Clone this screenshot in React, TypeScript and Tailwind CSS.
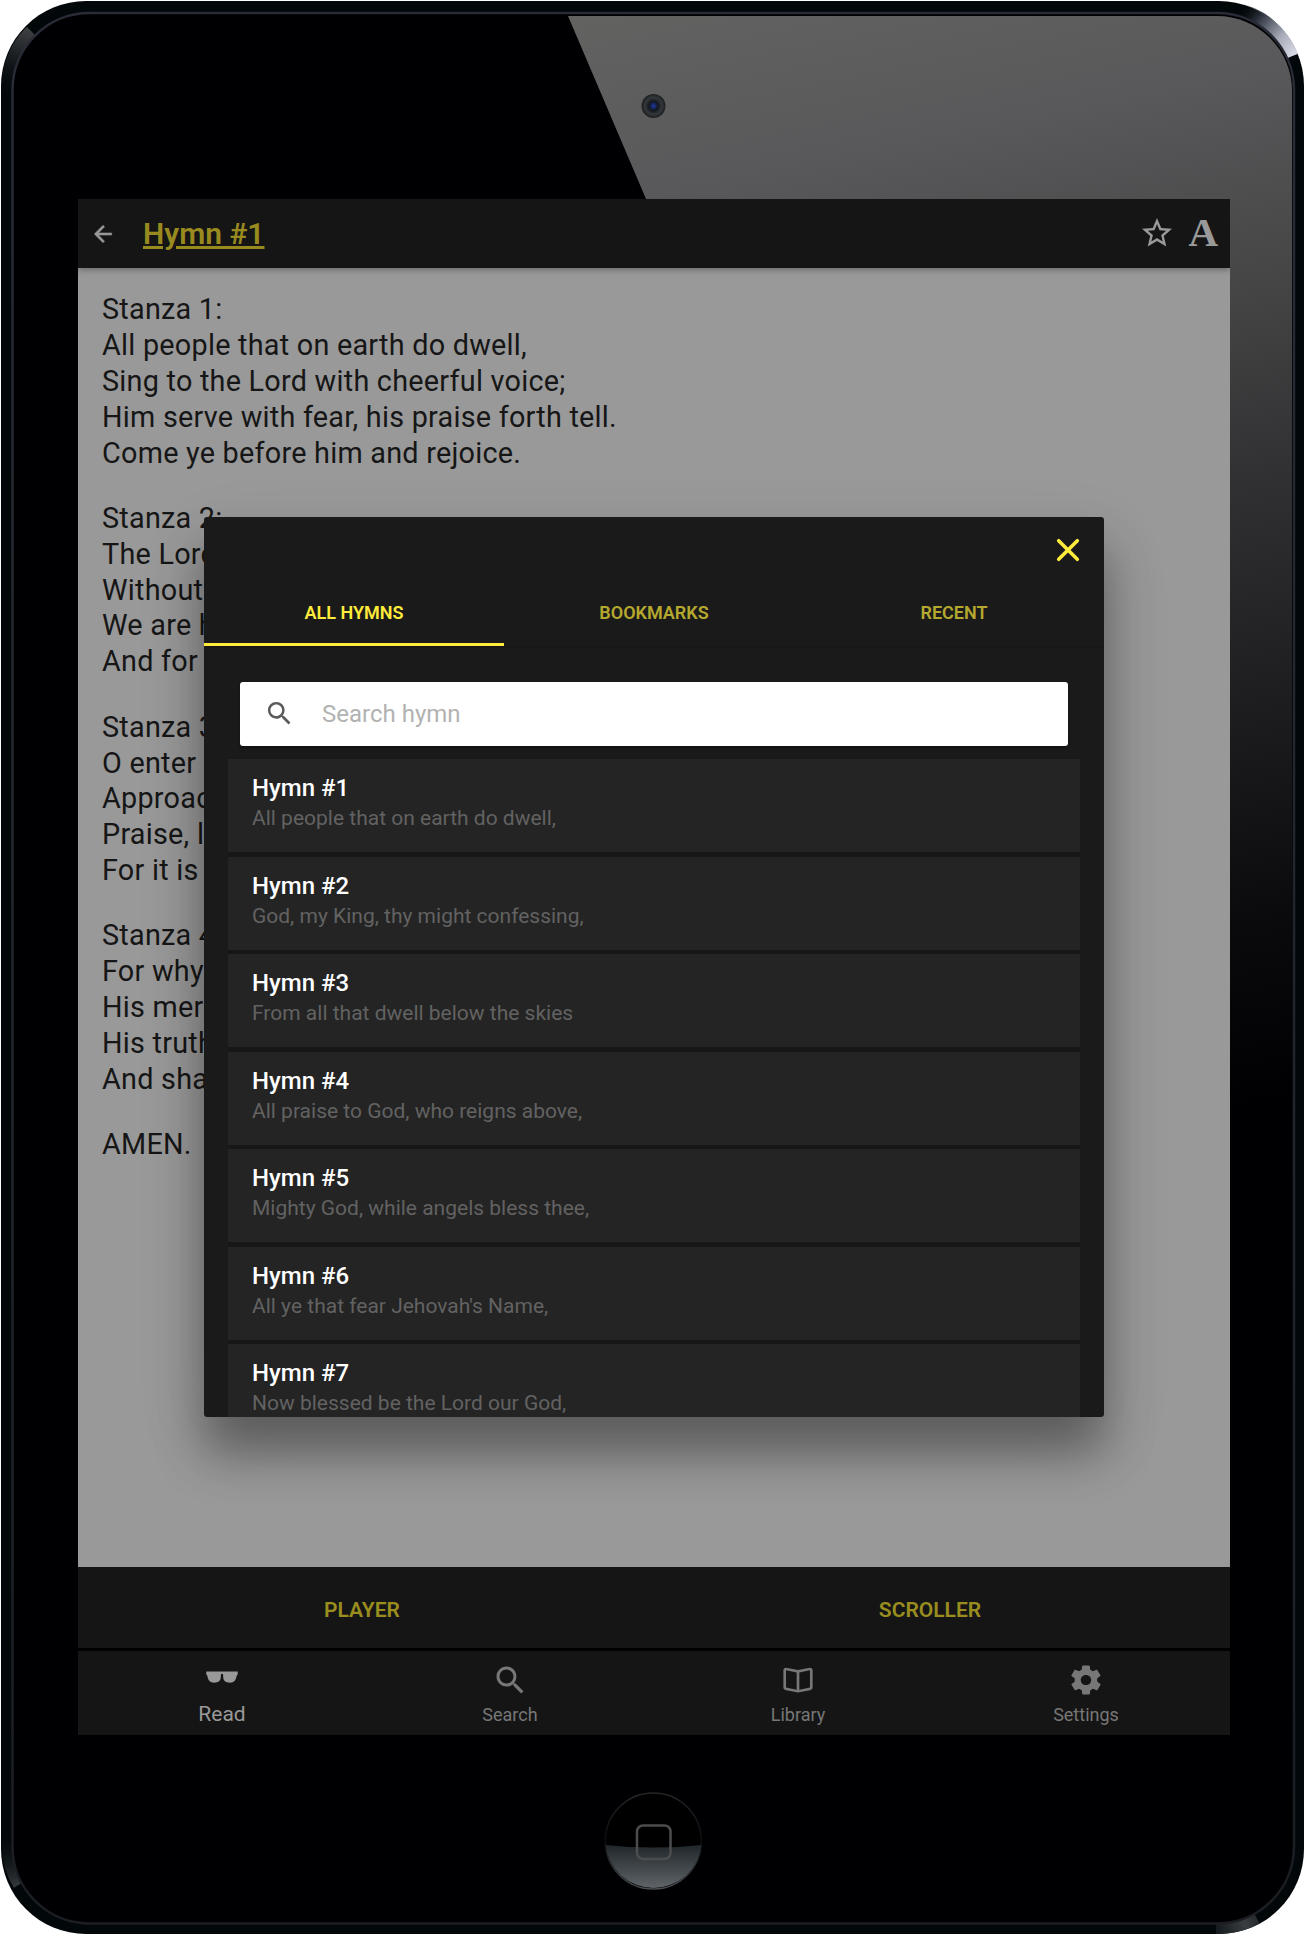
import type { ReactNode } from "react";
import { IoMdArrowBack, IoMdBook, IoMdGlasses, IoMdSearch, IoMdSettings } from "react-icons/io";
import { MdSearch, MdStarBorder } from "react-icons/md";

const STANZAS: string[][] = [
  [
    "Stanza 1:",
    "All people that on earth do dwell,",
    "Sing to the Lord with cheerful voice;",
    "Him serve with fear, his praise forth tell.",
    "Come ye before him and rejoice.",
  ],
  ["Stanza 2:", "The Lord", "Without", "We are h", "And for"],
  ["Stanza 3:", "O enter", "Approac", "Praise, l", "For it is"],
  ["Stanza 4:", "For why", "His mer", "His truth", "And sha"],
  ["AMEN."],
];

const HYMNS = [
  { title: "Hymn #1", line: "All people that on earth do dwell," },
  { title: "Hymn #2", line: "God, my King, thy might confessing," },
  { title: "Hymn #3", line: "From all that dwell below the skies" },
  { title: "Hymn #4", line: "All praise to God, who reigns above," },
  { title: "Hymn #5", line: "Mighty God, while angels bless thee," },
  { title: "Hymn #6", line: "All ye that fear Jehovah's Name," },
  { title: "Hymn #7", line: "Now blessed be the Lord our God," },
];

function TabletBody() {
  return (
    <svg className="absolute inset-0" width="1305" height="1935" viewBox="0 0 1305 1935" aria-hidden="true">
      <defs>
        <linearGradient id="glare" gradientUnits="userSpaceOnUse" x1="600" y1="16" x2="835" y2="1193">
          <stop offset="0" stopColor="#626261" />
          <stop offset="0.15" stopColor="#59595b" />
          <stop offset="0.32" stopColor="#464647" />
          <stop offset="0.49" stopColor="#303032" />
          <stop offset="0.69" stopColor="#1b1b1d" />
          <stop offset="0.85" stopColor="#0a0a0c" />
          <stop offset="1" stopColor="#000002" />
        </linearGradient>
        <linearGradient id="line" x1="0" y1="0" x2="0" y2="1">
          <stop offset="0" stopColor="#292b36" />
          <stop offset="0.5" stopColor="#22262e" />
          <stop offset="1" stopColor="#1b1d22" />
        </linearGradient>
        <linearGradient id="hiTR" gradientUnits="userSpaceOnUse" x1="1292" y1="56" x2="1238" y2="10">
          <stop offset="0" stopColor="#d6d9e4" />
          <stop offset="0.3" stopColor="#a7abb8" />
          <stop offset="0.65" stopColor="#3d444f" />
          <stop offset="1" stopColor="#02060a" stopOpacity="0" />
        </linearGradient>
        <linearGradient id="hiTL" gradientUnits="userSpaceOnUse" x1="32" y1="32" x2="6" y2="100">
          <stop offset="0" stopColor="#3c3e40" />
          <stop offset="0.4" stopColor="#1a1e21" />
          <stop offset="1" stopColor="#05090d" stopOpacity="0" />
        </linearGradient>
        <linearGradient id="hiBL" gradientUnits="userSpaceOnUse" x1="18" y1="1886" x2="6" y2="1830">
          <stop offset="0" stopColor="#34383a" />
          <stop offset="1" stopColor="#05090d" stopOpacity="0" />
        </linearGradient>
        <linearGradient id="hiBR" gradientUnits="userSpaceOnUse" x1="1257" y1="1916" x2="1214" y2="1930">
          <stop offset="0" stopColor="#24282b" />
          <stop offset="0.3" stopColor="#3a3e40" />
          <stop offset="1" stopColor="#12171b" />
        </linearGradient>
        <linearGradient id="home" x1="0" y1="0" x2="0" y2="1">
          <stop offset="0" stopColor="#1f262a" />
          <stop offset="1" stopColor="#606468" />
        </linearGradient>
        <linearGradient id="homeRing" x1="0" y1="0" x2="0" y2="1">
          <stop offset="0" stopColor="#262628" />
          <stop offset="0.5" stopColor="#0c0c0e" />
          <stop offset="1" stopColor="#4a4e52" />
        </linearGradient>
        <radialGradient id="lens">
          <stop offset="0" stopColor="#2238a0" />
          <stop offset="0.22" stopColor="#16265a" />
          <stop offset="0.38" stopColor="#14171c" />
          <stop offset="0.7" stopColor="#35383a" />
          <stop offset="1" stopColor="#1b1e20" />
        </radialGradient>
        <clipPath id="inner">
          <rect x="15" y="16" width="1277" height="1905" rx="75" />
        </clipPath>
      </defs>
      <rect x="1" y="1" width="1303" height="1933" rx="85" fill="#02070a" />
      <path d="M8 96 A79 79 0 0 1 31 31" fill="none" stroke="url(#hiTL)" strokeWidth="12" />
      <path d="M1232 7.500 A79 79 0 0 1 1292.500 56" fill="none" stroke="url(#hiTR)" strokeWidth="12" />
      <path d="M7.500 1838 A79 79 0 0 0 18.500 1885" fill="none" stroke="url(#hiBL)" strokeWidth="11" />
      <path d="M1257 1918.500 A79 79 0 0 1 1216 1928.500" fill="none" stroke="url(#hiBR)" strokeWidth="11" />
      <rect x="12.500" y="13" width="1281.500" height="1910.500" rx="77" fill="#000002" stroke="url(#line)" strokeWidth="2.500" />
      <path d="M568 16 H1305 V1200 H1073 Z" fill="url(#glare)" clipPath="url(#inner)" />
      <circle cx="653.500" cy="106" r="12" fill="url(#lens)" />
      <circle cx="653.300" cy="1841" r="48" fill="#000" stroke="url(#homeRing)" strokeWidth="1.500" />
      <path d="M605.500 1845 Q653.300 1850 701.500 1845 A48.300 48.300 0 0 1 605.500 1845 Z" fill="url(#home)" />
      <rect x="637" y="1825.500" width="33.500" height="33.500" rx="6" fill="none" stroke="#4b4c4e" strokeWidth="2.500" />
    </svg>
  );
}

function NavItem({ icon, label, active = false }: { icon: ReactNode; label: string; active?: boolean }) {
  return (
    <div
      className={
        active
          ? "flex flex-1 flex-col items-center justify-end gap-[7px] pb-2 text-[#999999]"
          : "flex flex-1 flex-col items-center justify-end gap-[6px] pb-[10px] text-[#777777]"
      }
    >
      <span className="text-[36px]">{icon}</span>
      <span className={active ? "text-[21px] leading-[25px]" : "text-[18px] leading-[21px]"}>{label}</span>
    </div>
  );
}

function HymnDialog() {
  return (
    <div className="absolute left-[126px] top-[318px] flex h-[900px] w-[900px] flex-col overflow-hidden rounded-[3px] bg-[#1a1a1a]">
      <div className="flex h-[66px] shrink-0 items-center justify-end pr-6">
        <svg width="24" height="24" viewBox="0 0 24 24" fill="none" stroke="#ffeb3b" strokeWidth="3.600" strokeLinecap="round">
          <path d="M2.700 2.700 21.300 21.300M21.300 2.700 2.700 21.300" />
        </svg>
      </div>
      <div className="flex h-[63px] shrink-0 text-[18px] font-semibold leading-[21px] text-[#b5a82e] shadow-[0_1px_3px_rgba(0,0,0,0.2)]">
        <div className="flex flex-1 items-center justify-center border-b-[3px] border-[#ffeb3b] pb-[2px] text-[#ffeb3b]">ALL HYMNS</div>
        <div className="flex flex-1 items-center justify-center border-b-[3px] border-transparent pb-[2px]">BOOKMARKS</div>
        <div className="flex flex-1 items-center justify-center border-b-[3px] border-transparent pb-[2px]">RECENT</div>
      </div>
      <div className="flex flex-col px-6 pt-9">
        <div className="mx-3 mb-[13.5px] flex h-[63.5px] shrink-0 items-center rounded-[3px] bg-white pl-6 shadow-[0_2px_3px_rgba(0,0,0,0.4)]">
          <MdSearch className="text-[31px] text-[#5b5b5b]" />
          <span className="ml-[27px] text-[24px] leading-7 text-[#b2b2b2]">Search hymn</span>
        </div>
        <div className="flex flex-col gap-[4.5px] bg-[#171717]">
          {HYMNS.map((h) => (
            <div key={h.title} className="h-[93px] shrink-0 bg-[#242424] pl-6 pt-[15px]">
              <div className="text-[24px] font-medium leading-7 text-white">{h.title}</div>
              <div className="mt-[4px] text-[21px] leading-[25px] text-[#626262]">{h.line}</div>
            </div>
          ))}
        </div>
      </div>
    </div>
  );
}

export default function App() {
  return (
    <div className="relative h-[1935px] w-[1305px] overflow-hidden bg-white pl-[78px] pt-[199px] font-[Roboto,sans-serif]">
      <TabletBody />
      <div className="relative flex h-[1536px] w-[1152px] flex-col overflow-hidden bg-[#999999]">
        <header className="relative flex h-[69px] shrink-0 items-center bg-[#151515] shadow-[0_2px_6px_rgba(0,0,0,0.3)]">
          <IoMdArrowBack className="ml-3 text-[26px] text-[#999999]" stroke="currentColor" strokeWidth="10" />
          <h1 className="ml-[27px] text-[30px] font-semibold leading-9 text-[#998a20] underline">Hymn #1</h1>
          <MdStarBorder className="mb-px ml-auto text-[36px] text-[#999999]" />
          <span className="mb-[3px] ml-[13px] mr-[12px] font-['Liberation_Serif',serif] text-[41px] font-bold leading-[48px] text-[#999999]">A</span>
        </header>
        <main className="flex flex-1 flex-col gap-[29.7px] pl-6 pt-[24.4px] text-[28.8px] leading-[35.8px] tracking-[0.24px] text-[#161616]">
          {STANZAS.map((lines) => (
            <div key={lines[0]} className="whitespace-nowrap">
              {lines.map((l) => (
                <div key={l}>{l}</div>
              ))}
            </div>
          ))}
        </main>
        <div className="flex h-[81px] shrink-0 bg-[#151515] pr-4 text-[21px] font-semibold text-[#998d20]">
          <div className="flex flex-1 items-center justify-center pt-[6px]">PLAYER</div>
          <div className="flex flex-1 items-center justify-center pt-[6px]">SCROLLER</div>
        </div>
        <nav className="flex h-[87px] shrink-0 border-t-[3px] border-black bg-[#151515]">
          <NavItem active icon={<IoMdGlasses />} label="Read" />
          <NavItem icon={<IoMdSearch />} label="Search" />
          <NavItem icon={<IoMdBook />} label="Library" />
          <NavItem icon={<IoMdSettings />} label="Settings" />
        </nav>
        <div className="pointer-events-none absolute left-[126px] top-[318px] h-[900px] w-[900px] rounded-[3px] shadow-[0_36px_48px_rgba(0,0,0,0.35),0_24px_72px_rgba(0,0,0,0.1)]" />
        <HymnDialog />
      </div>
    </div>
  );
}
